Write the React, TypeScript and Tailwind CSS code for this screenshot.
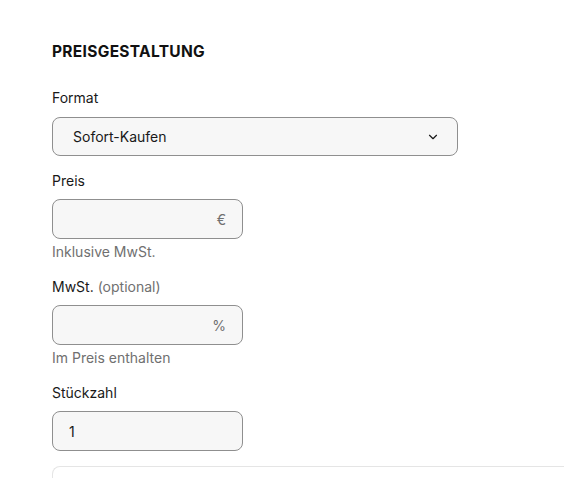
import { ChevronDown } from "lucide-react";

const font = { fontFamily: "Inter, 'Noto Sans', sans-serif" };

function Label({ children }: { children: React.ReactNode }) {
  return <div className="text-[14px] leading-5 text-[#191919]">{children}</div>;
}

function Affixed({ suffix, value }: { suffix?: string; value?: string }) {
  return (
    <div className="mt-2 flex h-10 w-[191px] items-center rounded-lg border border-[#8f8f8f] bg-[#f7f7f7] px-4 text-[14px] text-[#191919]">
      <span className="flex-1">{value}</span>
      {suffix && <span className="text-[#707070]">{suffix}</span>}
    </div>
  );
}

export default function App() {
  return (
    <div className="h-[478px] overflow-hidden bg-white pl-[52px] pt-10" style={font}>
      <h2 className="pt-[2px] text-[15.5px] font-bold leading-5 tracking-[0.02em] text-[#111]">PREISGESTALTUNG</h2>

      <div className="mt-[26px]">
        <Label>Format</Label>
        <div className="mt-[9px] flex h-[39px] w-[406px] items-center justify-between rounded-lg border border-[#8f8f8f] bg-[#f7f7f7] pl-5 pr-[17px] text-[14px] text-[#191919]">
          <span>Sofort-Kaufen</span>
          <ChevronDown className="h-3.5 w-3.5" strokeWidth={2} />
        </div>
      </div>

      <div className="mt-[15px]">
        <Label>Preis</Label>
        <Affixed suffix="€" />
        <div className="mt-[3px] text-[14px] leading-5 text-[#707070]">Inklusive MwSt.</div>
      </div>

      <div className="mt-[15px]">
        <Label>
          MwSt. <span className="text-[#707070]">(optional)</span>
        </Label>
        <Affixed suffix="%" />
        <div className="mt-[3px] text-[14px] leading-5 text-[#707070]">Im Preis enthalten</div>
      </div>

      <div className="mt-[15px]">
        <Label>Stückzahl</Label>
        <Affixed value="1" />
      </div>

      <div className="mt-[15px] h-10 rounded-tl-lg border-l border-t border-[#e5e5e5]" />
    </div>
  );
}
